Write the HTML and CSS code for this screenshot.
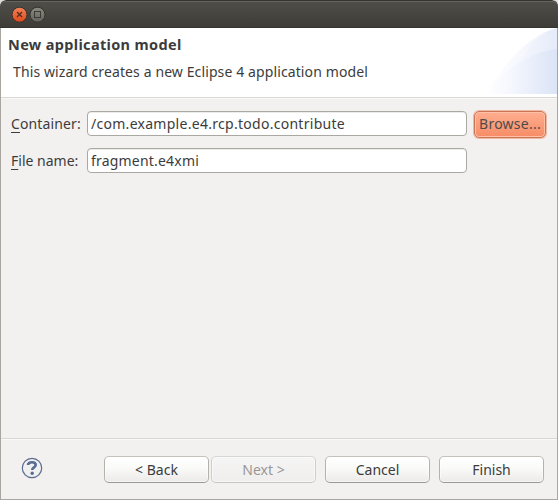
FILE: index.html
```html
<!DOCTYPE html>
<html lang="en">
<head>
<meta charset="utf-8">
<title>New application model</title>
<link rel="stylesheet" href="styles.css">
</head>
<body>
<div class="window">
  <div class="titlebar">
    <svg class="controls" width="36" height="18" viewBox="0 0 36 18" aria-hidden="true">
      <defs>
        <linearGradient id="close" x1="0" y1="0" x2="0" y2="1"><stop offset="0" stop-color="#f58258"/><stop offset="1" stop-color="#dc4a1b"/></linearGradient>
        <linearGradient id="max" x1="0" y1="0" x2="0" y2="1"><stop offset="0" stop-color="#8b8981"/><stop offset="1" stop-color="#64635b"/></linearGradient>
      </defs>
      <circle cx="8.5" cy="8.7" r="7.5" fill="url(#close)" stroke="#35332e"/>
      <path d="M6 6l5 5M11 6l-5 5" stroke="#50281a" stroke-width="1.2"/>
      <circle cx="26.5" cy="8.7" r="7.5" fill="url(#max)" stroke="#35332e"/>
      <rect x="23.5" y="5.5" width="6" height="6" fill="none" stroke="#3b3a35"/>
    </svg>
  </div>
  <div class="content">
    <div class="header">
      <div class="heading">
        <h1>New application model</h1>
        <p>This wizard creates a new Eclipse 4 application model</p>
      </div>
      <svg class="banner" width="72" height="66" viewBox="0 0 72 66" aria-hidden="true">
        <defs>
          <linearGradient id="b1" gradientUnits="userSpaceOnUse" x1="0" y1="0" x2="72" y2="0"><stop offset="0" stop-color="#fff"/><stop offset="1" stop-color="#edf1fb"/></linearGradient>
          <linearGradient id="b2" gradientUnits="userSpaceOnUse" x1="25" y1="0" x2="72" y2="0"><stop offset="0" stop-color="#f8faff"/><stop offset="1" stop-color="#e5ebf8"/></linearGradient>
          <linearGradient id="b3" gradientUnits="userSpaceOnUse" x1="0" y1="0" x2="72" y2="0"><stop offset="0" stop-color="#fff"/><stop offset=".3" stop-color="#f7f9fe"/><stop offset="1" stop-color="#dbe4f6"/></linearGradient>
        </defs>
        <path d="M0 66C20 35 46 5 72 0V66Z" fill="url(#b1)"/>
        <path d="M34 36C43 18 55 4 72 0V66H34Z" fill="url(#b2)"/>
        <path d="M0 66C19 41 45 24 72 21V66Z" fill="url(#b3)"/>
      </svg>
    </div>
    <div class="form">
      <label for="container"><u>C</u>ontainer:</label>
      <input class="field path" id="container" value="/com.example.e4.rcp.todo.contribute">
      <button class="browse">Browse...</button>
      <label class="file" for="file"><u>F</u>ile name:</label>
      <input class="field" id="file" value="fragment.e4xmi">
    </div>
    <div class="footer">
      <svg class="help" width="22" height="22" viewBox="0 0 22 22" aria-hidden="true">
        <circle cx="11" cy="11" r="9.7" fill="#f0f0f1" stroke="#596d8f" stroke-width="1.2"/>
        <path d="M7 8C7.2 5.8 8.8 5.2 11 5.2C13.2 5.2 14.7 6.3 14.7 8C14.7 10.5 11.2 10.2 11.2 13" fill="none" stroke="#596d92" stroke-width="2.6"/>
        <circle cx="11.2" cy="16.2" r="1.7" fill="#596d92"/>
      </svg>
      <button class="back">&lt; Back</button>
      <button class="next" disabled>Next &gt;</button>
      <button class="cancel">Cancel</button>
      <button class="finish">Finish</button>
    </div>
  </div>
</div>
</body>
</html>
```
FILE: styles.css
```css
* { box-sizing: border-box; }
body { margin: 0; background: #dedede; font: 14px/20px "Noto Sans", "Open Sans", sans-serif; color: #3c3c3c; }
.window { width: 558px; height: 500px; display: flex; flex-direction: column; overflow: hidden; border-radius: 6px 6px 0 0; }
.titlebar { height: 28px; flex: none; padding: 6px 0 0 11px; border-radius: 6px 6px 0 0; border: 1px solid #35342f; border-width: 1px 0; background: linear-gradient(#504e48, #3d3c37); box-shadow: inset 0 1px #66645d; }
.controls { display: block; margin-top: -1px; }
.content { flex: 1; display: flex; flex-direction: column; background: #f2f1f0; border: 1px solid #a9a6a1; border-top: 0; }
.header { height: 70px; display: flex; justify-content: space-between; background: #fff; border-bottom: 1px solid #d8d7d5; }
.heading { padding: 6px 0 0 7px; }
.banner { flex: none; }
h1, p { margin: 0; white-space: nowrap; }
h1 { font-size: 14.5px; line-height: 20px; letter-spacing: .34px; }
p { padding: 8px 0 0 5px; letter-spacing: .11px; }
.form { flex: 1; display: grid; grid-template-columns: 76px 380px 7px 73px; grid-template-rows: 28px 25px; row-gap: 10px; padding: 11px 0 0 10px; align-content: start; align-items: center; border-top: 1px solid #faf9f9; }
.form label { grid-column: 1; white-space: nowrap; letter-spacing: .12px; }
.form .file { letter-spacing: 0; }
u { text-decoration-thickness: 1px; text-underline-offset: 3px; }
.field { grid-column: 2; width: 380px; height: 25px; margin: 0; border: 1px solid #aaa8a3; border-radius: 4px; background: #fff; box-shadow: inset 0 1px #ececea; padding: 0 0 0 3px; font: inherit; color: inherit; letter-spacing: .2px; outline: 0; }
.path { letter-spacing: .28px; position: relative; top: -.5px; }
button { flex: none; height: 27px; width: 105px; padding: 0; font: inherit; color: #3c3c3c; border: 1px solid #b6b3ad; border-color: #c5c2bd #b5b2ac #9b9892; border-radius: 5px; background: linear-gradient(#fff, #fbfbfa 40%, #ebeae9); box-shadow: inset 0 0 0 1px #ffffff80; }
.browse { grid-column: 4; width: 72px; height: 27px; letter-spacing: .25px; border: 1px solid #cc7658; background: linear-gradient(#ffae90, #f68c66); box-shadow: inset 0 0 0 1px #ffc0a5, 0 0 0 1px #f0b7a2; color: #4c4c4c; }
.footer { height: 61px; display: flex; align-items: flex-start; padding: 16px 13px 0 20px; border-top: 1px solid #d8d7d5; box-shadow: inset 0 1px #fafafa; }
.footer button { margin-top: 1px; }
.help { margin: 2px 61px 0 0; }
.next { margin-left: 2px; }
.cancel, .finish { margin-left: 9px; }
.next { color: #999795; border-color: #d8d6d3 #d0ceca #c7c5c1; background: linear-gradient(#f6f5f5, #efeeed); }
```
